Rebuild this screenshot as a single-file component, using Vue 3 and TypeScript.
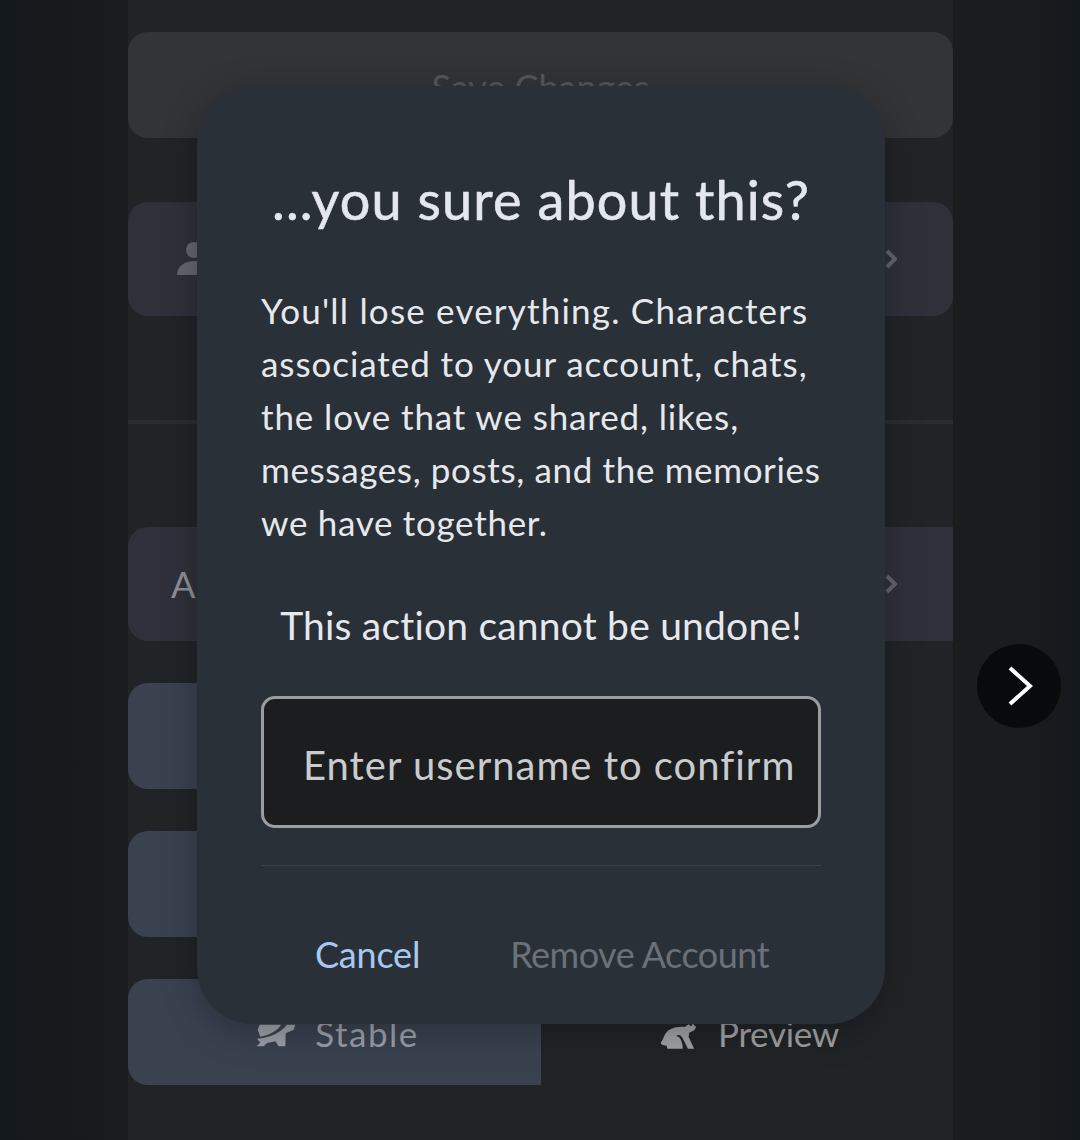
<script setup lang="ts">
interface Line {
  text: string
  spacing: number
}
const lines: Line[] = [
  { text: "You'll lose everything. Characters", spacing: 1.2 },
  { text: 'associated to your account, chats,', spacing: 0.93 },
  { text: 'the love that we shared, likes,', spacing: 0.87 },
  { text: 'messages, posts, and the memories', spacing: 0.64 },
  { text: 'we have together.', spacing: 0.7 },
]
</script>

<template>
  <div class="screen">
    <main class="column">
      <div class="save"><span>Save Changes</span></div>
      <div class="row first">
        <svg class="person" viewBox="0 0 40 40" width="40" height="40"><circle cx="21" cy="11" r="8" /><path d="M4 36c0-9 8-14 17-14s16 5 16 14z" /></svg>
        <svg class="chev" viewBox="0 0 12 20" width="12" height="20"><path d="M2 2l8 8-8 8" /></svg>
      </div>
      <div class="rule"></div>
      <div class="row second">
        <span class="label">App</span>
        <svg class="chev" viewBox="0 0 12 20" width="12" height="20"><path d="M2 2l8 8-8 8" /></svg>
      </div>
      <div class="toggle"><div class="on"></div></div>
      <div class="toggle"><div class="on"></div></div>
      <div class="toggle">
        <div class="on">
          <svg viewBox="40 25 120 75" width="40" height="25">
            <path d="M48 30H112C102 48 78 60 50 66L42 45Z" />
            <path d="M40 72C80 70 112 52 130 30H155L150 45L126 56L125 95H105L95 80L70 85L60 95H38L50 84Z" />
          </svg>
          <span>Stable</span>
        </div>
        <div class="off">
          <svg viewBox="33 26 112 80" width="37" height="26">
            <path d="M35 85C40 80 42 72 47 62C55 45 80 35 108 38L120 30L128 36L133 28L143 38L138 48L122 56L120 68L137 105H118L103 75C98 62 88 60 82 66C95 68 102 85 102 105H55L52 95C42 95 33 92 35 85Z" />
          </svg>
          <span>Preview</span>
        </div>
      </div>
    </main>
    <aside class="fab">
      <svg viewBox="0 0 28 40" width="28" height="40"><path d="M3 2l20 18L3 38" /></svg>
    </aside>
    <section class="modal">
      <h1>...you sure about this?</h1>
      <p class="body">
        <span v-for="l in lines" :key="l.text" :style="{ letterSpacing: l.spacing + 'px' }">{{ l.text }}</span>
      </p>
      <p class="warn">This action cannot be undone!</p>
      <input class="field" placeholder="Enter username to confirm" />
      <div class="sep"></div>
      <div class="actions">
        <button class="cancel">Cancel</button>
        <button class="remove">Remove Account</button>
      </div>
    </section>
  </div>
</template>

<style>
html, body { margin: 0; background: #1a1b1d; }
</style>

<style scoped>
.screen {
  position: relative;
  width: 1080px;
  height: 1140px;
  overflow: hidden;
  font-family: "Lato", "Open Sans", sans-serif;
  background: linear-gradient(90deg, #14191d 0, #191b1d 128px, #1b1c1e 953px, #1b1c1e 1010px, #14191d 1080px);
}
.column {
  width: 825px;
  height: 1140px;
  margin-left: 128px;
  padding-top: 32px;
  box-sizing: border-box;
  background: #212427;
  display: flex;
  flex-direction: column;
}
.save {
  height: 106px;
  padding-top: 4px;
  box-sizing: border-box;
  border-radius: 20px;
  background: #333437;
  display: flex;
  align-items: center;
  justify-content: center;
  color: #56575b;
  font-size: 36px;
}
.row {
  height: 114px;
  display: flex;
  align-items: center;
  justify-content: space-between;
  background: #2e313a;
  border-radius: 20px;
  padding: 0 56px 0 48px;
  box-sizing: border-box;
}
.first { margin-top: 64px; }
.second {
  margin-top: 103px;
  border-radius: 20px 0 0 20px;
  padding-left: 43px;
  background: #2e303b;
}
.label { color: #8e8f95; font-size: 36px; }
.person { fill: #63666e; margin-left: -3px; }
.chev { fill: none; stroke: #63656e; stroke-width: 4; }
.rule { height: 4px; margin-top: 104px; background: #2a2d30; }
.second + .toggle { margin-top: 42px; }
.toggle {
  display: grid;
  grid-template-columns: 413px 412px;
  height: 106px;
}
.toggle + .toggle { margin-top: 42px; }
.on, .off {
  display: flex;
  align-items: center;
  justify-content: center;
  font-size: 35px;
  padding-top: 2px;
  box-sizing: border-box;
}
.on {
  gap: 18px;
  padding-left: 7px;
  letter-spacing: 1.5px;
  background: #3a4250;
  border-radius: 20px 0 0 20px;
  color: #9ba0a8;
}
.on svg { fill: #9ba0a8; margin-top: 5px; }
.off {
  gap: 21px;
  padding-left: 5px;
  color: #a0a1a4;
  letter-spacing: -0.3px;
}
.off svg { fill: #a0a1a4; margin-top: 5px; }
.fab {
  position: absolute;
  left: 977px;
  top: 644px;
  width: 84px;
  height: 84px;
  border-radius: 50%;
  background: #090a0b;
  display: flex;
  align-items: center;
  justify-content: center;
}
.fab svg { fill: none; stroke: #fff; stroke-width: 4; margin-left: 4px; }
.modal {
  position: absolute;
  left: 197px;
  top: 86px;
  width: 688px;
  height: 938px;
  box-sizing: border-box;
  padding: 0 64px;
  border-radius: 56px;
  background: #293038;
  box-shadow: 0 8px 36px rgba(0, 0, 0, .28);
  display: flex;
  flex-direction: column;
}
h1 {
  margin: 78px 0 0;
  height: 72px;
  font-size: 54px;
  line-height: 72px;
  font-weight: 400;
  letter-spacing: 1.1px;
  -webkit-text-stroke: 0.6px #e4e7ee;
  color: #e4e7ee;
  text-align: center;
  white-space: nowrap;
}
.body {
  margin: 48px 0 0;
  color: #e6e8ec;
  font-size: 35px;
  line-height: 53px;
}
.body span { display: block; white-space: nowrap; }
.warn {
  margin: 48px 0 0;
  color: #e6e8ec;
  font-size: 39px;
  line-height: 56px;
  letter-spacing: 0.2px;
  text-align: center;
  white-space: nowrap;
}
.field {
  margin-top: 43px;
  height: 132px;
  box-sizing: border-box;
  width: 100%;
  border: 3px solid #9a9da2;
  border-radius: 14px;
  background: #1c1d1f;
  padding: 6px 10px 0 39px;
  font: inherit;
  font-size: 40px;
  letter-spacing: 1px;
  outline: none;
}
.field::placeholder { color: #c9cbcd; opacity: 1; }
.sep { height: 1px; margin-top: 37px; background: #3b4048; }
.actions {
  display: flex;
  gap: 90px;
  padding-left: 54px;
  margin-top: 64px;
}
.actions button {
  border: 0;
  padding: 0;
  background: none;
  font: inherit;
  font-size: 36px;
  line-height: 48px;
}
.actions .cancel { color: #a8c8f0; letter-spacing: -0.2px; }
.actions .remove { color: #6c7078; letter-spacing: -0.5px; }
</style>
